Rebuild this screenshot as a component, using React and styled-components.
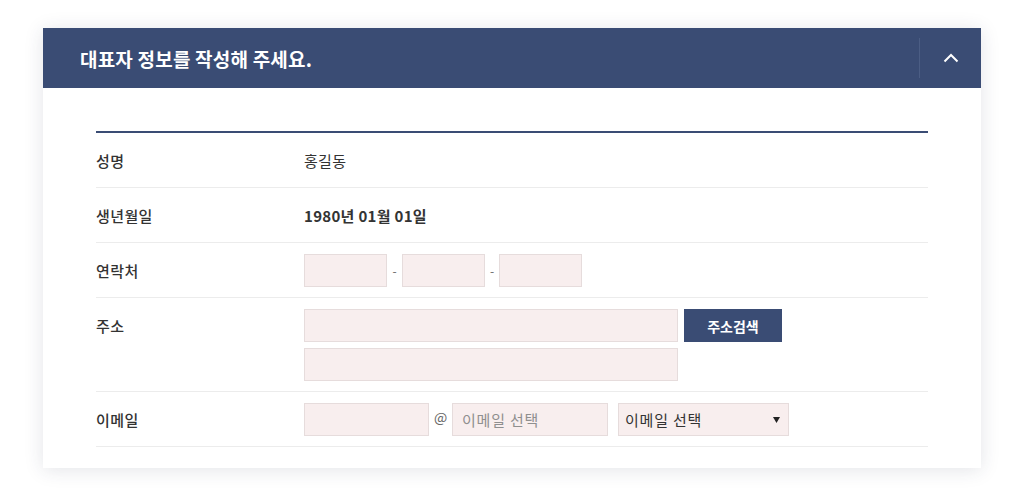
import React from "react";
import styled, { createGlobalStyle } from "styled-components";

const Global = createGlobalStyle`
  html, body { margin: 0; padding: 0; background: #ffffff; }
  body { font-family: "Noto Sans CJK KR", "Noto Sans", sans-serif; color: #333; }
  * { box-sizing: border-box; }
`;

const Page = styled.div`
  padding: 28px 43px 28px 43px;
`;

const Card = styled.section`
  width: 938px;
  background: #fff;
  box-shadow: 0 2px 18px rgba(40, 50, 80, 0.13);
`;

const Header = styled.header`
  height: 60px;
  background: #3a4c74;
  display: flex;
  align-items: center;
  padding-left: 37px;
`;

const Title = styled.h2`
  flex: 1;
  margin: 0;
  color: #fff;
  font-size: 19px;
  font-weight: 700;
  letter-spacing: 0.2px;
`;

const Toggle = styled.button`
  width: 62px;
  height: 40px;
  border: 0;
  border-left: 1px solid #4b5d84;
  background: transparent;
  display: flex;
  align-items: center;
  justify-content: center;
  padding: 0;
  cursor: pointer;
`;

const Body = styled.div`
  padding: 43px 53px 21px;
`;

const Table = styled.div`
  border-top: 2px solid #3a4c74;
`;

const Row = styled.div`
  display: grid;
  grid-template-columns: 208px 1fr;
  padding: 11px 0 10px;
  border-bottom: 1px solid #ececec;
  align-items: start;
`;

const Label = styled.div`
  font-size: 15px;
  line-height: 33px;
  font-weight: 500;
  color: #333;
  letter-spacing: 0.4px;
`;

const Value = styled.div`
  font-size: 15px;
  line-height: 33px;
  color: #333;
  font-weight: ${(p) => (p.$bold ? 700 : 400)};
  letter-spacing: 0.3px;
`;

const Inline = styled.div`
  display: flex;
  align-items: center;
`;

const Stack = styled.div`
  display: flex;
  flex-direction: column;
  gap: 6px;
`;

const Field = styled.input`
  width: ${(p) => p.$w}px;
  height: 33px;
  background: #f8eeee;
  border: 1px solid #e6dcdc;
  padding: 0 9px;
  font-family: inherit;
  font-size: 15px;
  letter-spacing: 0.8px;
  color: #333;
  outline: none;
  &::placeholder { color: #8f8f8f; }
`;

const Sep = styled.span`
  width: ${(p) => p.$w}px;
  text-align: center;
  font-size: ${(p) => (p.$top ? 14 : 12)}px;
  color: #666;
  align-self: ${(p) => (p.$top ? "flex-start" : "center")};
  line-height: ${(p) => (p.$top ? "28px" : "normal")};
`;

const SearchBtn = styled.button`
  width: 98px;
  height: 33px;
  background: #3a4c74;
  border: 0;
  color: #fff;
  font-family: inherit;
  font-size: 14px;
  font-weight: 700;
  margin-left: 6px;
  padding: 0;
`;

const Select = styled.div`
  width: 171px;
  height: 33px;
  margin-left: 10px;
  background: #f8eeee;
  border: 1px solid #e6dcdc;
  display: flex;
  align-items: center;
  justify-content: space-between;
  padding: 0 8px 0 6px;
  font-size: 15px;
  letter-spacing: 0.8px;
  color: #333;
`;

export default function App() {
  return (
    <>
      <Global />
      <Page>
        <Card>
          <Header>
            <Title>대표자 정보를 작성해 주세요.</Title>
            <Toggle aria-label="접기">
              <svg width="16" height="10" viewBox="0 0 16 10">
                <path d="M1.5 8.5 L8 2 L14.5 8.5" fill="none" stroke="#fff" strokeWidth="2" />
              </svg>
            </Toggle>
          </Header>
          <Body>
            <Table>
              <Row>
                <Label>성명</Label>
                <Value>홍길동</Value>
              </Row>
              <Row>
                <Label>생년월일</Label>
                <Value $bold>1980년 01월 01일</Value>
              </Row>
              <Row>
                <Label>연락처</Label>
                <Inline>
                  <Field $w={83} />
                  <Sep $w={15}>-</Sep>
                  <Field $w={83} />
                  <Sep $w={14}>-</Sep>
                  <Field $w={83} />
                </Inline>
              </Row>
              <Row>
                <Label>주소</Label>
                <Stack>
                  <Inline>
                    <Field $w={374} />
                    <SearchBtn>주소검색</SearchBtn>
                  </Inline>
                  <Field $w={374} />
                </Stack>
              </Row>
              <Row>
                <Label>이메일</Label>
                <Inline>
                  <Field $w={125} />
                  <Sep $w={23} $top>@</Sep>
                  <Field $w={156} placeholder="이메일 선택" />
                  <Select>
                    <span>이메일 선택</span>
                    <svg width="7" height="6" viewBox="0 0 7 6">
                      <path d="M0 0 H7 L3.5 6 Z" fill="#222" />
                    </svg>
                  </Select>
                </Inline>
              </Row>
            </Table>
          </Body>
        </Card>
      </Page>
    </>
  );
}
